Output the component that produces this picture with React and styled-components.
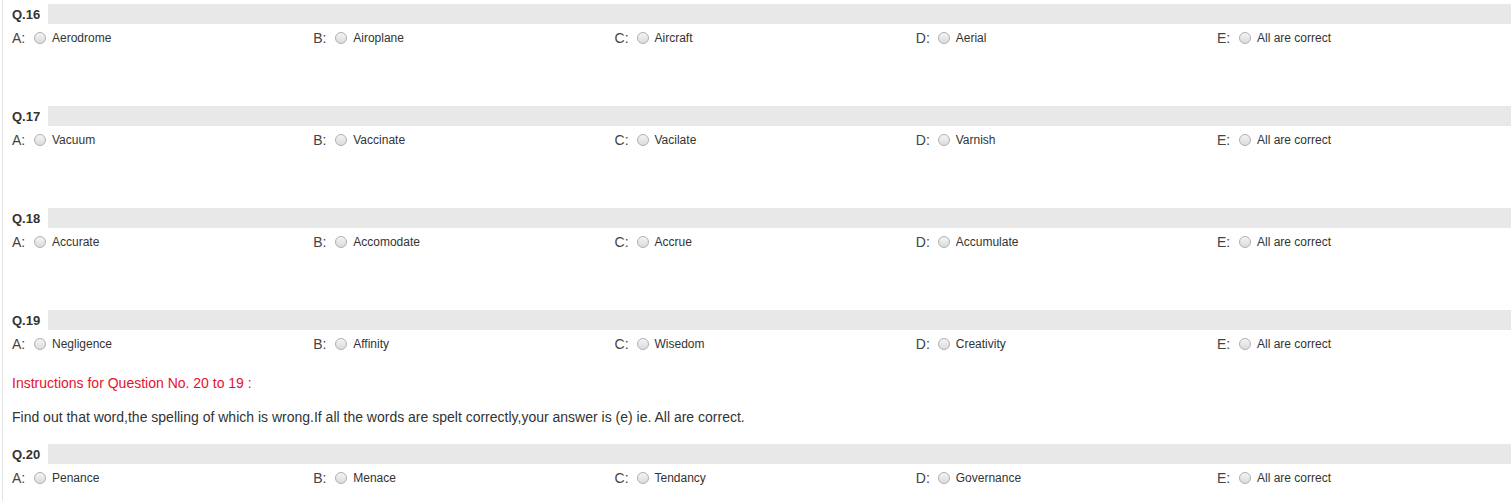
import React from "react";
import styled, { createGlobalStyle } from "styled-components";

const GlobalStyle = createGlobalStyle`
  body {
    margin: 0;
    background: #fff;
    font-family: "Liberation Sans", Arial, sans-serif;
    color: #333;
  }
`;

const questions = [
  { no: 16, options: ["Aerodrome", "Airoplane", "Aircraft", "Aerial", "All are correct"] },
  { no: 17, options: ["Vacuum", "Vaccinate", "Vacilate", "Varnish", "All are correct"] },
  { no: 18, options: ["Accurate", "Accomodate", "Accrue", "Accumulate", "All are correct"] },
  {
    no: 19,
    options: ["Negligence", "Affinity", "Wisedom", "Creativity", "All are correct"],
    last: true,
  },
];

const q20 = { no: 20, options: ["Penance", "Menace", "Tendancy", "Governance", "All are correct"] };

const letters = ["A", "B", "C", "D", "E"];

const Question = ({ q }) => (
  <Block last={q.last}>
    <Header>
      <QNo>Q.{q.no}</QNo>
      <Bar />
    </Header>
    <Options>
      {q.options.map((opt, i) => (
        <Option key={opt}>
          <Letter>{letters[i]}:</Letter>
          <Radio type="radio" name={`q${q.no}`} />
          <OptText>{opt}</OptText>
        </Option>
      ))}
    </Options>
  </Block>
);

const App = () => {
  return (
    <>
      <GlobalStyle />
      <Page>
        {questions.map((q) => (
          <Question key={q.no} q={q} />
        ))}
        <Instructions>Instructions for Question No. 20 to 19 :</Instructions>
        <Description>
          Find out that word,the spelling of which is wrong.If all the words are spelt
          correctly,your answer is (e) ie. All are correct.
        </Description>
        <Question q={{ ...q20, last: true }} />
      </Page>
    </>
  );
};

const Page = styled.div`
  margin-left: 2px;
  border-left: 1px solid #e2e2e2;
  padding: 4px 0 12px 9px;
  overflow: hidden;
`;

const Block = styled.div`
  margin-bottom: ${(props) => (props.last ? "17px" : "56px")};
`;

const Header = styled.div`
  display: flex;
  align-items: center;
  height: 20px;
`;

const QNo = styled.span`
  width: 36px;
  font-size: 13px;
  font-weight: 700;
  color: #333;
`;

const Bar = styled.div`
  flex: 1;
  height: 20px;
  background: #e8e8e8;
`;

const Options = styled.div`
  display: grid;
  grid-template-columns: repeat(5, 301.25px);
  padding-top: 6px;
  height: 20px;
`;

const Option = styled.label`
  display: flex;
  align-items: center;
  height: 16px;
`;

const Letter = styled.span`
  font-size: 14px;
  color: #444;
  width: 22px;
`;

const Radio = styled.input`
  appearance: none;
  margin: 0 6px 0 0;
  width: 12px;
  height: 12px;
  border-radius: 50%;
  border: 1px solid #b0b0b0;
  background: linear-gradient(#f4f4f4, #dcdcdc);
  box-sizing: border-box;
`;

const OptText = styled.span`
  font-size: 12px;
  color: #333;
`;

const Instructions = styled.div`
  font-size: 14px;
  line-height: 20px;
  color: #e8112d;
  margin-bottom: 14px;
`;

const Description = styled.div`
  font-size: 14px;
  line-height: 20px;
  color: #333;
  margin-bottom: 17px;
`;

export default App;
